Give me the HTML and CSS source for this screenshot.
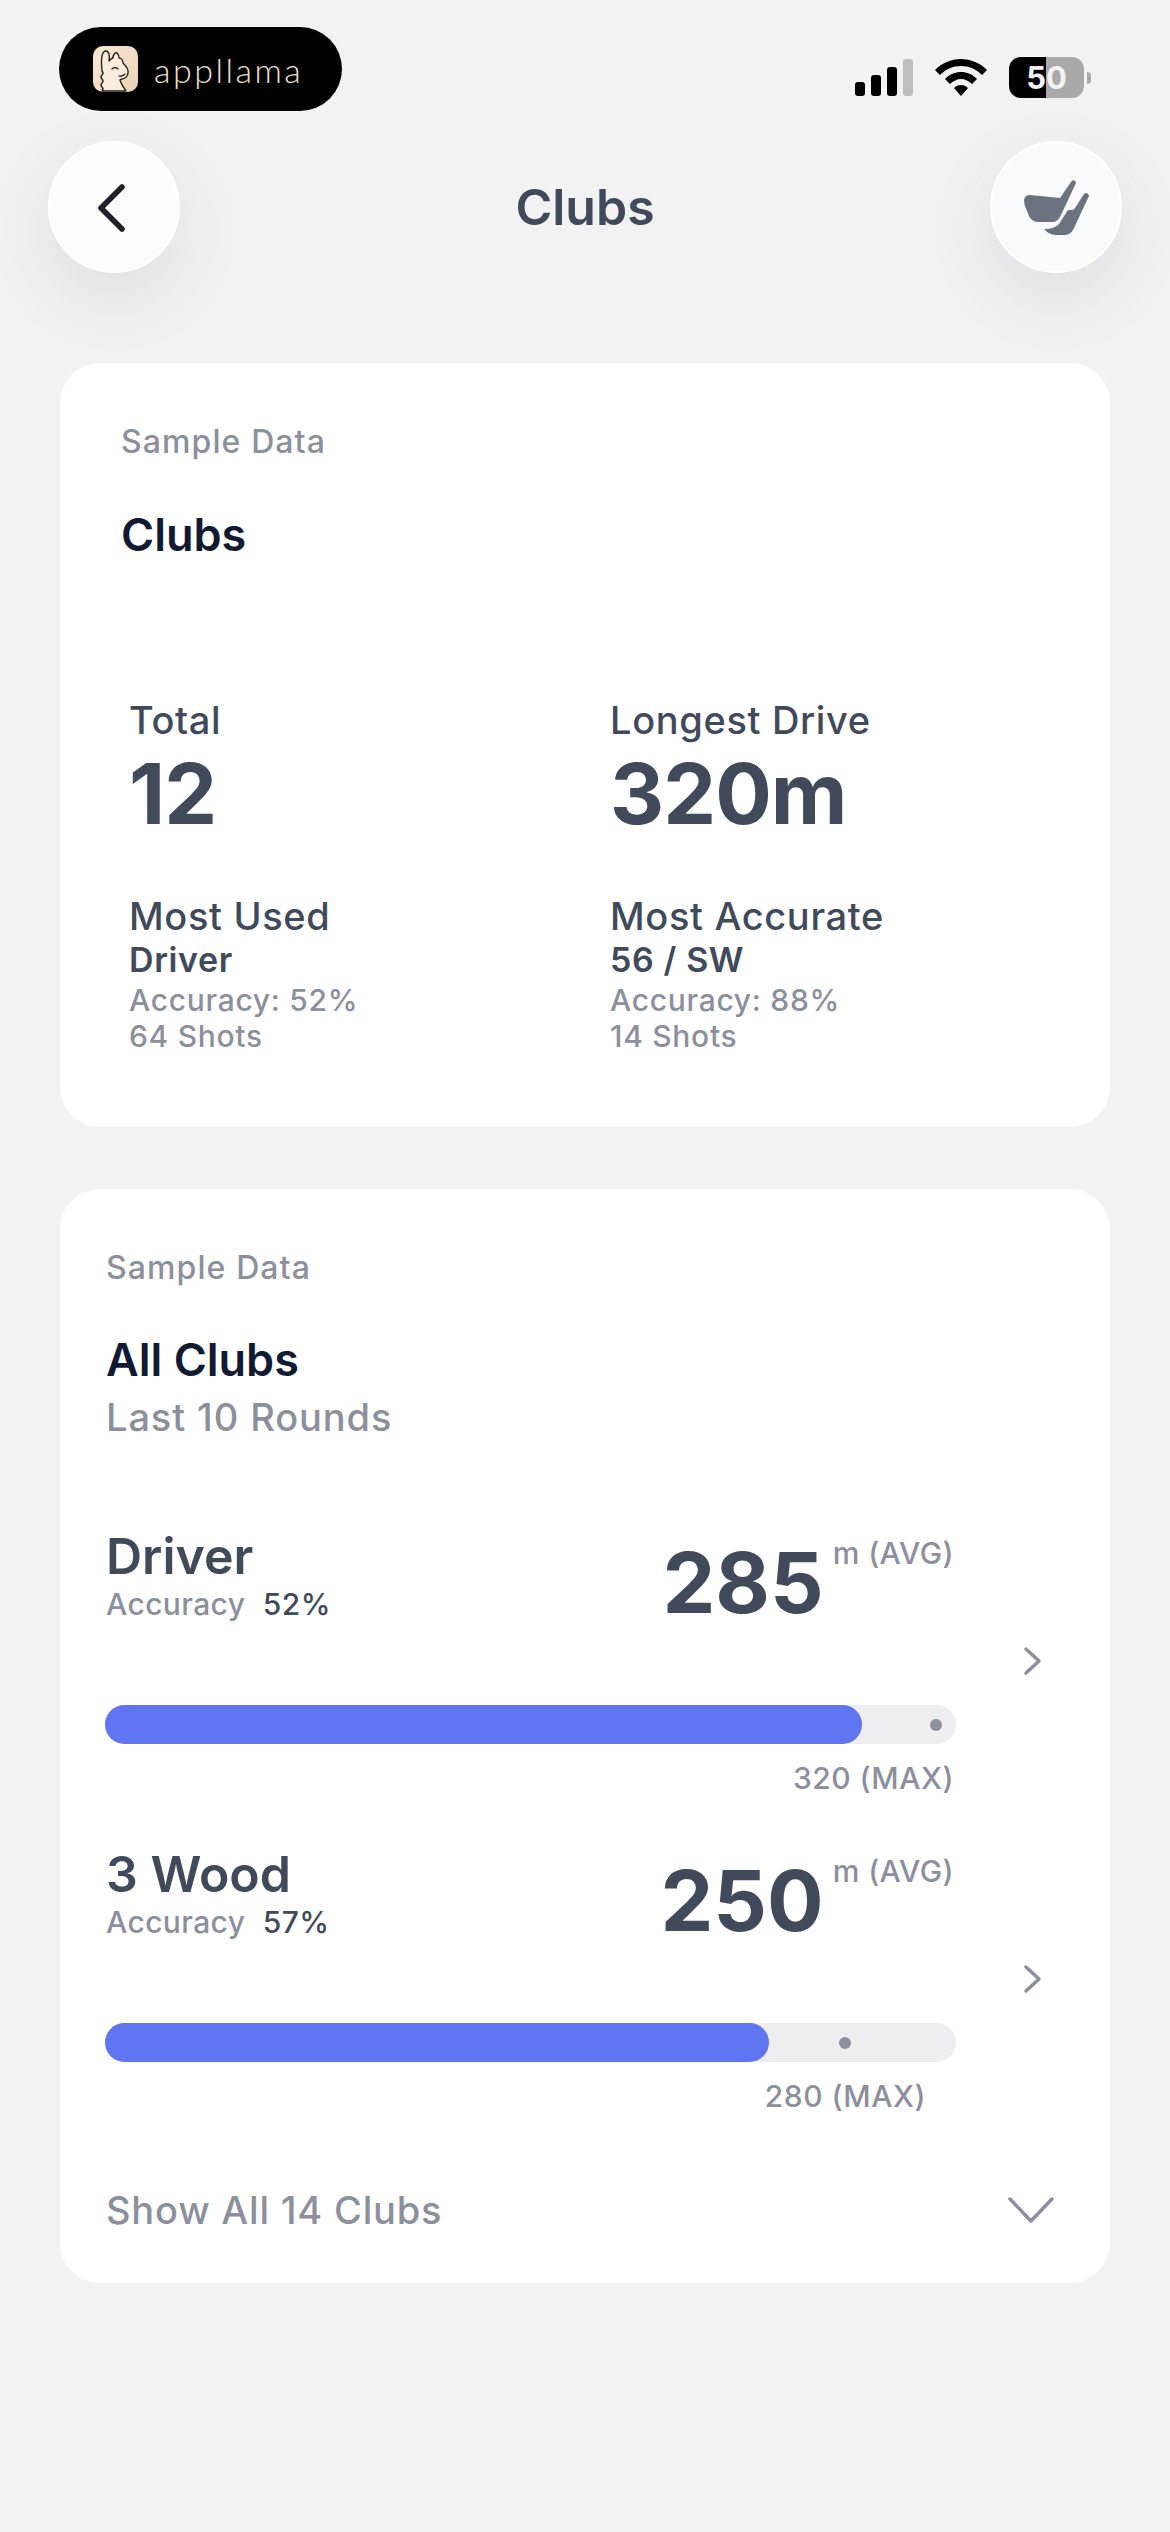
FILE: index.html
```html
<!DOCTYPE html>
<html lang="en">
  <head>
    <meta charset="UTF-8" />
    <meta name="viewport" content="width=device-width, initial-scale=1.0" />
    <title>Clubs</title>
    <link rel="stylesheet" href="styles.css">
  </head>
  <body>
    <div class="status">
      <div class="brand">
        <svg class="llama" viewBox="0 0 45 46">
          <defs>
            <linearGradient id="llamaBg" x1="0" y1="0" x2="1" y2="1">
              <stop offset="0" stop-color="#f8e8d6"/>
              <stop offset="1" stop-color="#ebd2b4"/>
            </linearGradient>
          </defs>
          <rect width="45" height="46" rx="10" fill="url(#llamaBg)"/>
          <path d="M9 45Q11 43 9 41Q7 39 9 37Q11 35 9 33Q7 31 9 29Q11 27 9 25Q8 14 9 10Q10 5 13 5C16 5 17 10 16 15C18 13 19 12 20 12C20 9 22 6 24 7C26 9 26 11 26 12C28 12 30 14 30 17C33 20 36 23 35 27C35 30 32 33 29 33L27 34C28 38 31 42 33 45Z" fill="#f9ecdd" stroke="#26221f" stroke-width="1.4" stroke-linejoin="round"/>
          <path d="M19 23Q22 20 25 23M26 30Q29 31 32 28" fill="none" stroke="#26221f" stroke-width="1.3" stroke-linecap="round"/>
        </svg>
        <span class="brand-name">appllama</span>
      </div>
      <div class="status-icons">
        <svg class="signal" viewBox="0 0 58 37">
          <rect x="0" y="23" width="10" height="14" rx="3"/>
          <rect x="16" y="16" width="10" height="21" rx="3"/>
          <rect x="32" y="8" width="10" height="29" rx="3"/>
          <rect x="48" y="0" width="10" height="37" rx="3" fill="#bdbdbd"/>
        </svg>
        <svg class="wifi" viewBox="0 0 52 37">
          <path d="M26 0C36 0 45 4 52 11L47 16C41 10 34 7 26 7C18 7 11 10 5 16L0 11C7 4 16 0 26 0Z"/>
          <path d="M26 13C32 13 37 15 42 20L37 25C34 22 30 20 26 20C22 20 18 22 15 25L10 20C15 15 20 13 26 13Z"/>
          <path d="M26 26C29 26 31 27 33 29L26 37L19 29C21 27 23 26 26 26Z"/>
        </svg>
        <div class="battery">
          <div class="battery-body"><span class="battery-num">50</span></div>
          <div class="battery-cap"></div>
        </div>
      </div>
    </div>

    <div class="topbar">
      <button class="round-btn">
        <svg class="back-icon" viewBox="0 0 30 50">
          <path d="M26 4L5 25L26 46" fill="none" stroke="#1f2126" stroke-width="5.5" stroke-linecap="round" stroke-linejoin="round"/>
        </svg>
      </button>
      <h1 class="page-title">Clubs</h1>
      <button class="round-btn round-btn-tint">
        <svg class="club-icon" viewBox="0 0 90 80">
          <path d="M13 35Q14 30 19 30L49 33L60 17Q62 14 64 16Q66 18 64 20L50 50Q47 57 42 57L28 57Q21 57 18 51L14 41Q13 37 13 35Z" fill="#6b7280"/>
          <path d="M33 64Q44 64 48 59L57 45L61 45Q63 45 64 43L73 29Q75 27 77 29Q79 31 77 33L63 63Q60 70 54 70L46 70Q38 70 33 64Z" fill="#6b7280"/>
        </svg>
      </button>
    </div>

    <div class="content">
      <section class="card card-stats">
        <div class="sample">Sample Data</div>
        <h2 class="card-title">Clubs</h2>
        <div class="stats">
          <div class="stat">
            <div class="stat-label">Total</div>
            <div class="stat-value">12</div>
          </div>
          <div class="stat">
            <div class="stat-label">Longest Drive</div>
            <div class="stat-value">320m</div>
          </div>
          <div class="stat">
            <div class="stat-label">Most Used</div>
            <div class="stat-club">Driver</div>
            <div class="stat-note">Accuracy: 52%</div>
            <div class="stat-note">64 Shots</div>
          </div>
          <div class="stat">
            <div class="stat-label">Most Accurate</div>
            <div class="stat-club">56 / SW</div>
            <div class="stat-note">Accuracy: 88%</div>
            <div class="stat-note">14 Shots</div>
          </div>
        </div>
      </section>

      <section class="card card-list">
        <div class="sample">Sample Data</div>
        <h2 class="card-title card-title-list">All Clubs</h2>
        <div class="card-sub">Last 10 Rounds</div>

        <div class="club">
          <div class="club-main">
            <div class="club-top">
              <div>
                <div class="club-name">Driver</div>
                <div class="club-acc">Accuracy <b>52%</b></div>
              </div>
              <div class="club-avg">
                <span class="avg-num">285</span>
                <span class="avg-unit">m (AVG)</span>
              </div>
            </div>
            <div class="bar">
              <div class="bar-fill" style="width: 89%"></div>
              <div class="bar-dot" style="left: 97.7%"></div>
            </div>
            <div class="bar-max">320 (MAX)</div>
          </div>
          <svg class="chev-right" viewBox="0 0 20 30">
            <path d="M3 3L16 15L3 27" fill="none" stroke="#8b909c" stroke-width="3.5" stroke-linecap="round" stroke-linejoin="round"/>
          </svg>
        </div>

        <div class="club club-next">
          <div class="club-main">
            <div class="club-top">
              <div>
                <div class="club-name">3 Wood</div>
                <div class="club-acc">Accuracy <b>57%</b></div>
              </div>
              <div class="club-avg">
                <span class="avg-num">250</span>
                <span class="avg-unit">m (AVG)</span>
              </div>
            </div>
            <div class="bar">
              <div class="bar-fill" style="width: 78%"></div>
              <div class="bar-dot" style="left: 87%"></div>
            </div>
            <div class="bar-max bar-max-inset">280 (MAX)</div>
          </div>
          <svg class="chev-right" viewBox="0 0 20 30">
            <path d="M3 3L16 15L3 27" fill="none" stroke="#8b909c" stroke-width="3.5" stroke-linecap="round" stroke-linejoin="round"/>
          </svg>
        </div>

        <div class="show-all">
          <span>Show All 14 Clubs</span>
          <svg class="chev-down" viewBox="0 0 46 26">
            <path d="M2 2L23 24L44 2" fill="none" stroke="#8b909c" stroke-width="3.5" stroke-linecap="round" stroke-linejoin="round"/>
          </svg>
        </div>
      </section>
    </div>
  </body>
</html>
```

FILE: styles.css
```css
* {
  box-sizing: border-box;
}

body {
  margin: 0;
  min-height: 2532px;
  background-color: #f2f2f3;
  font-family: Inter, "Liberation Sans", sans-serif;
  color: #414a5b;
}

/* status bar */
.status {
  display: flex;
  justify-content: space-between;
  align-items: flex-start;
  height: 141px;
  padding: 27px 0 0 59px;
}

.brand {
  display: flex;
  align-items: center;
  width: 283px;
  height: 84px;
  padding-left: 34px;
  border-radius: 42px;
  background-color: #000;
}

.llama {
  width: 45px;
  height: 46px;
}

.brand-name {
  margin-left: 16px;
  font-family: Lato, sans-serif;
  font-size: 34px;
  font-weight: 300;
  letter-spacing: 2.5px;
  color: #f0e0ce;
}

.status-icons {
  display: flex;
  align-items: flex-start;
  padding: 30px 79px 0 0;
}

.signal {
  width: 58px;
  height: 37px;
  margin-top: 2px;
}

.wifi {
  width: 52px;
  height: 37px;
  margin: 2px 0 0 22px;
}

.battery {
  display: flex;
  align-items: center;
  margin-left: 22px;
}

.battery-body {
  width: 75px;
  height: 41px;
  border-radius: 12px;
  background: linear-gradient(90deg, #000 50%, #a9a9a9 50%);
  text-align: center;
}

.battery-num {
  font-size: 31px;
  font-weight: 700;
  line-height: 41px;
  color: #f2f2f2;
}

.battery-cap {
  width: 4px;
  height: 12px;
  margin-left: 3px;
  border-radius: 0 6px 6px 0;
  background-color: #a9a9a9;
}

/* header */
.topbar {
  display: flex;
  justify-content: space-between;
  align-items: center;
  height: 132px;
  padding: 0 48px;
}

.round-btn {
  display: flex;
  justify-content: center;
  align-items: center;
  width: 132px;
  height: 132px;
  padding: 0;
  border: 2px solid #fff;
  border-radius: 50%;
  background-color: #fcfcfd;
  box-shadow: 0 24px 70px rgba(60, 60, 70, 0.1);
}

.round-btn-tint {
  background-color: #f9fafc;
}

.back-icon {
  width: 30px;
  height: 50px;
  margin-right: 6px;
  margin-top: 2px;
}

.club-icon {
  flex-shrink: 0;
  width: 90px;
  height: 80px;
  margin-top: -4px;
}

.page-title {
  margin: 0;
  font-size: 50px;
  font-weight: 600;
  line-height: 60px;
}

/* cards */
.content {
  padding: 90px 60px 0;
}

.card {
  border-radius: 40px;
  background-color: #fff;
}

.card-stats {
  height: 764px;
  padding: 60px 0 0 61px;
}

.card-list {
  height: 1094px;
  margin-top: 62px;
  padding: 60px 0 0 46px;
}

.sample {
  font-size: 32px;
  font-weight: 550;
  line-height: 38px;
  letter-spacing: 1.1px;
  color: #8b909c;
}

.card-title {
  margin: 46px 0 0;
  font-size: 45px;
  font-weight: 600;
  line-height: 56px;
  color: #111a33;
}

.card-title-list {
  margin-top: 45px;
}

.card-sub {
  margin-top: 6px;
  font-size: 38px;
  font-weight: 550;
  line-height: 46px;
  letter-spacing: 0.9px;
  color: #8b909c;
}

/* top card numbers */
.stats {
  display: grid;
  grid-template-columns: 481px 1fr;
  row-gap: 53px;
  margin: 134px 0 0 8px;
}

.stat-label {
  font-size: 38px;
  font-weight: 550;
  line-height: 46px;
  letter-spacing: 0.65px;
}

.stat-value {
  margin-top: 5px;
  font-size: 84px;
  font-weight: 700;
  line-height: 92px;
  letter-spacing: -1px;
}

.stat-club {
  margin-top: 1px;
  font-size: 34px;
  font-weight: 600;
  line-height: 40px;
  letter-spacing: 0.6px;
}

.stat-note {
  font-size: 30px;
  font-weight: 550;
  line-height: 36px;
  letter-spacing: 0.7px;
  color: #8b909c;
}

.stat-club + .stat-note {
  margin-top: 2px;
}

/* club rows */
.club {
  display: flex;
  align-items: center;
  margin-top: 86px;
}

.club-next {
  margin-top: 48px;
}

.club-main {
  width: 850px;
}

.club-top {
  display: flex;
  justify-content: space-between;
}

.club-name {
  font-size: 50px;
  font-weight: 600;
  line-height: 60px;
}

.club-acc {
  font-size: 30px;
  font-weight: 550;
  line-height: 36px;
  letter-spacing: 0.4px;
  color: #8b909c;
}

.club-acc b {
  margin-left: 9px;
  font-weight: 550;
  color: #414a5b;
}

.club-avg {
  display: flex;
  gap: 9px;
  padding-right: 2px;
}

.avg-num {
  margin-top: 11px;
  font-size: 84px;
  font-weight: 700;
  line-height: 92px;
}

.avg-unit {
  margin-top: 9px;
  font-size: 30px;
  font-weight: 550;
  line-height: 36px;
  letter-spacing: 0.4px;
  color: #8b909c;
}

.bar {
  position: relative;
  height: 39px;
  margin: 76px 0 0 -1px;
  border-radius: 20px;
  background-color: #eeeef0;
}

.bar-fill {
  height: 39px;
  border-radius: 20px;
  background-color: #5f75f2;
}

.bar-dot {
  position: absolute;
  top: 14px;
  width: 12px;
  height: 12px;
  margin-left: -6px;
  border-radius: 50%;
  background-color: #8b909c;
}

.bar-max {
  margin-top: 16px;
  padding-right: 2px;
  font-size: 30px;
  font-weight: 550;
  line-height: 36px;
  letter-spacing: 0.5px;
  text-align: right;
  color: #8b909c;
}

.bar-max-inset {
  padding-right: 30px;
}

.chev-right {
  width: 20px;
  height: 30px;
  margin-left: 67px;
}

.show-all {
  display: flex;
  justify-content: space-between;
  align-items: center;
  margin-top: 73px;
  padding-right: 56px;
  font-size: 38px;
  font-weight: 550;
  line-height: 46px;
  letter-spacing: 0.8px;
  color: #8b909c;
}

.chev-down {
  width: 46px;
  height: 26px;
}
```
